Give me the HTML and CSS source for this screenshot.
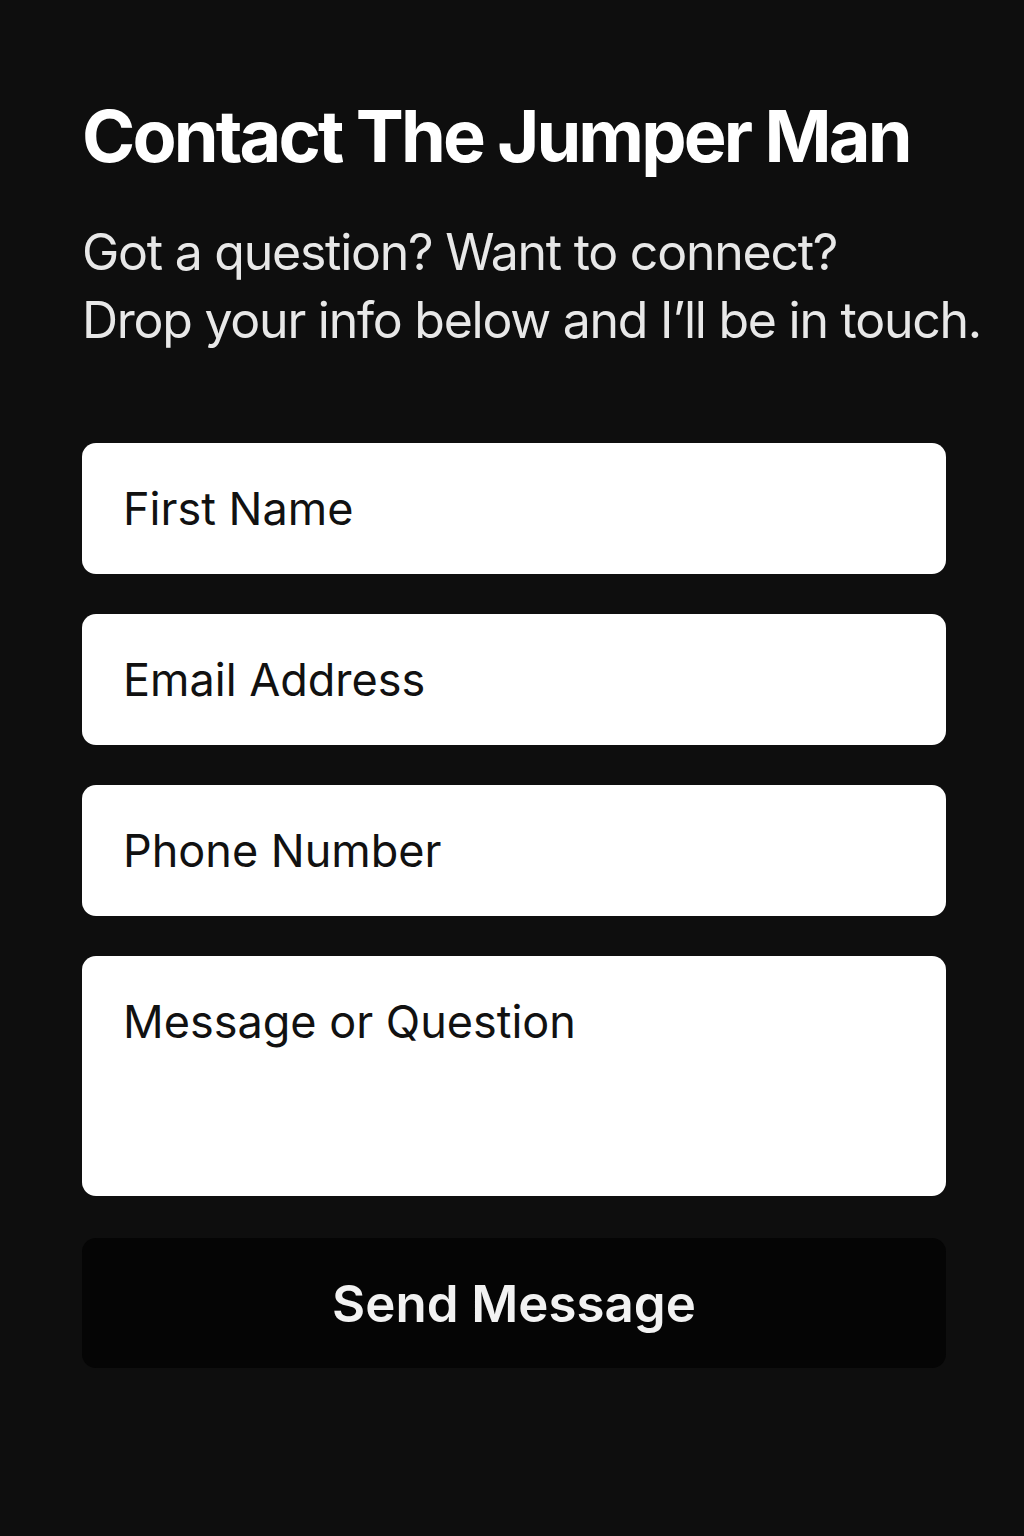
FILE: index.html
```html
<!DOCTYPE html>
<html lang="en">
<head>
<meta charset="utf-8">
<title>Contact The Jumper Man</title>
<link rel="stylesheet" href="styles.css">
</head>
<body>
<main class="page">
  <h1 class="title">Contact The Jumper Man</h1>
  <p class="intro">Got a question? Want to connect?<br>Drop your info below and I’ll be in touch.</p>
  <form class="form">
    <input class="field" type="text" placeholder="First Name">
    <input class="field" type="email" placeholder="Email Address">
    <input class="field" type="tel" placeholder="Phone Number">
    <textarea class="field field-area" placeholder="Message or Question"></textarea>
    <button class="send" type="button">Send Message</button>
  </form>
</main>
</body>
</html>
```

FILE: styles.css
```css
html, body {
  margin: 0;
  background: #0e0e0e;
}
body {
  font-family: Inter, "Noto Sans", "Liberation Sans", sans-serif;
  color: #fff;
}
.page {
  padding: 96px 0 0 82px;
  display: flex;
  flex-direction: column;
}
.title {
  margin: 0;
  font-size: 72px;
  font-weight: 700;
  line-height: 80px;
  letter-spacing: -2.85px;
  white-space: nowrap;
}
.intro {
  margin: 42px 0 0;
  font-size: 50px;
  font-weight: 400;
  line-height: 68px;
  letter-spacing: -1.25px;
  color: #e8e8e8;
  white-space: nowrap;
}
.form {
  margin-top: 89px;
  display: flex;
  flex-direction: column;
  gap: 40px;
  width: 864px;
}
.field {
  box-sizing: border-box;
  height: 131px;
  border: none;
  border-radius: 14px;
  background: #fff;
  padding: 0 41px;
  font-family: inherit;
  font-size: 45px;
  letter-spacing: 0;
  color: #111;
  outline: none;
}
.field::placeholder {
  color: #111;
  opacity: 1;
}
.field-area {
  height: 240px;
  padding-top: 38px;
  resize: none;
  line-height: 56px;
}
.send {
  box-sizing: border-box;
  height: 130px;
  margin-top: 2px;
  border: none;
  border-radius: 14px;
  background: #050505;
  color: #f2f2f2;
  font-family: inherit;
  font-size: 51px;
  font-weight: 600;
  letter-spacing: 0;
}
```
